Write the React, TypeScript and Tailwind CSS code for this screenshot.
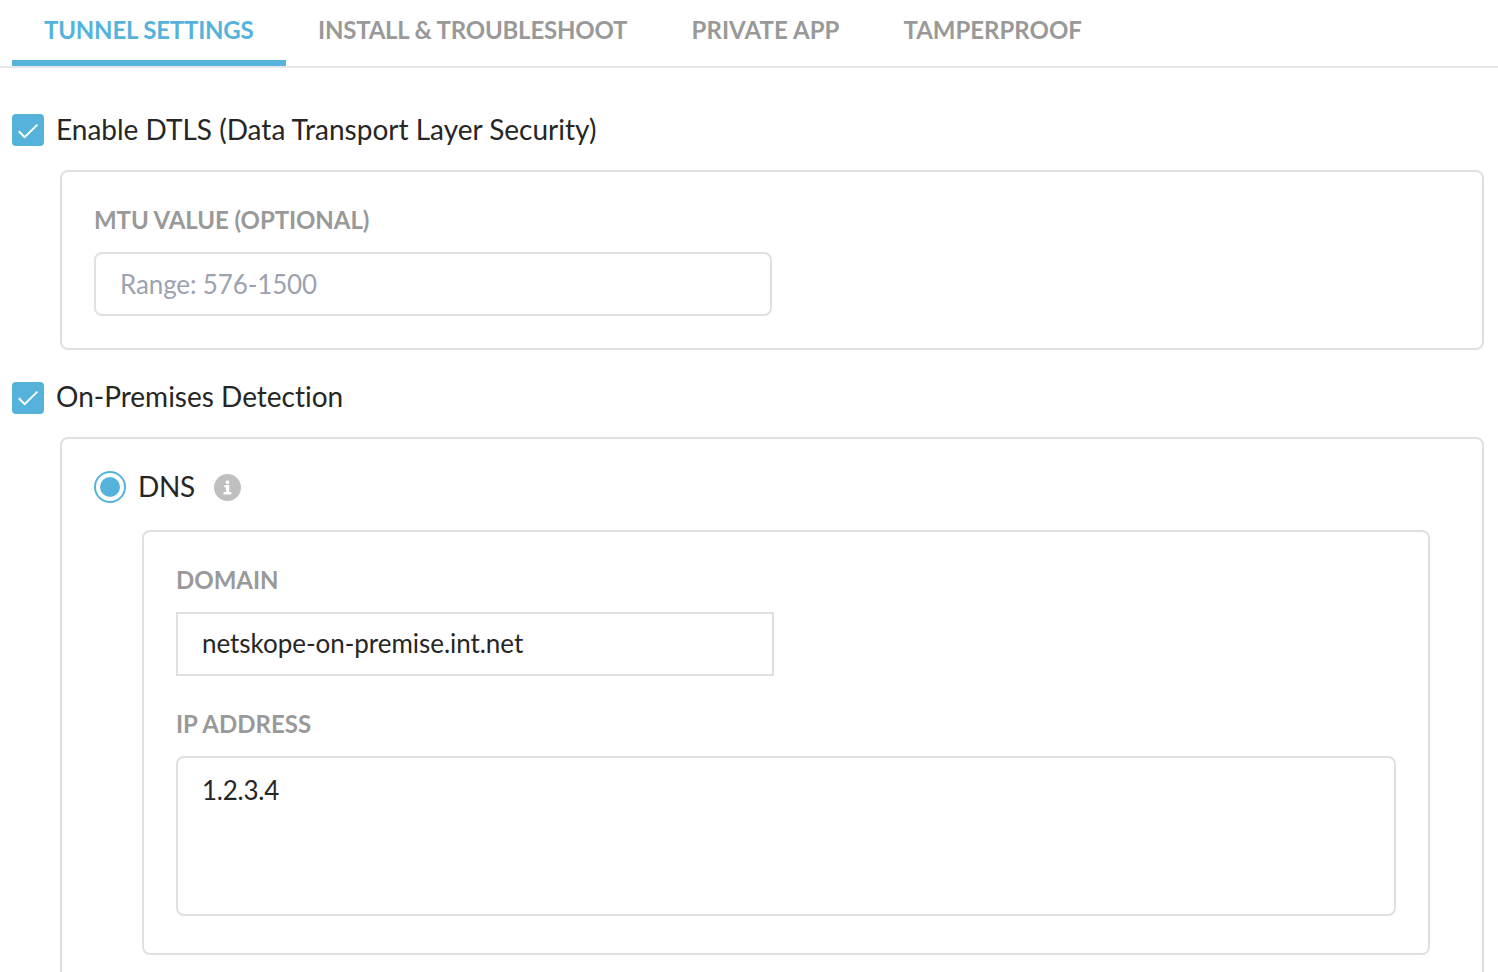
import React from "react";

const tabs = [
  { name: "TUNNEL SETTINGS", style: "w-[274px] border-b-[6px] border-[#55b3db] tracking-[-0.2px] text-[#55b3db]" },
  { name: "INSTALL & TROUBLESHOOT", style: "w-[373.5px] tracking-[-0.21px] text-[#999]" },
  { name: "PRIVATE APP", style: "w-[212px] tracking-[0.07px] text-[#999]" },
  { name: "TAMPERPROOF", style: "w-[242px] tracking-[-0.02px] text-[#999]" },
];

function Check({ label, raised = false }: { label: string; raised?: boolean }) {
  return (
    <label className="ml-3 flex h-8 items-center gap-3 text-[28px] leading-8 text-[#262626]">
      <span className="flex size-8 shrink-0 items-center justify-center rounded-[4px] bg-[#55b3db]">
        <svg viewBox="0 0 32 32" className="size-8" fill="none" stroke="white" strokeWidth="2">
          <path d={raised ? "M6.8 16.3 12.7 22.2 25.4 9.6" : "M6.8 17.3 12.7 23.2 25.4 10.6"} />
        </svg>
      </span>
      <span className={raised ? "-mt-1 whitespace-nowrap" : "-mt-[2px] whitespace-nowrap"}>{label}</span>
    </label>
  );
}

function FieldLabel({ children }: { children: React.ReactNode }) {
  return <div className="h-8 text-2xl leading-8 font-bold whitespace-nowrap text-[#999]">{children}</div>;
}

export default function App() {
  return (
    <main className="h-[972px] w-[1498px] overflow-hidden bg-white font-['Lato',sans-serif] [font-variant-ligatures:no-common-ligatures]">
      <nav className="flex h-[68px] border-b-2 border-[#e6e6e6] pl-3">
        {tabs.map((tab) => (
          <div
            key={tab.name}
            className={"h-[66px] px-8 pt-[14px] text-2xl leading-8 font-bold whitespace-nowrap " + tab.style}
          >
            {tab.name}
          </div>
        ))}
      </nav>

      <div className="pt-[46px]">
        <Check label="Enable DTLS (Data Transport Layer Security)" />
        <section className="mt-6 ml-[60px] h-[180px] w-[1424px] rounded-lg border-2 border-[#e0e0e0] px-8 pt-8">
          <FieldLabel>
            <span className="tracking-[-0.07px]">MTU VALUE (OPTIONAL)</span>
          </FieldLabel>
          <div className="mt-4 flex h-16 w-[678px] items-center rounded-lg border-2 border-[#e0e0e0] px-6 text-[26px] tracking-[-0.13px] text-[#9ca3af]">
            Range: 576-1500
          </div>
        </section>
      </div>

      <div className="pt-8">
        <Check label="On-Premises Detection" raised />
        <section className="mt-[23px] ml-[60px] h-[600px] w-[1424px] rounded-lg border-2 border-[#e0e0e0] px-8 pt-8">
          <div className="flex h-8 items-center text-[28px] leading-8 text-[#262626]">
            <span className="flex size-8 items-center justify-center rounded-full border-2 border-[#55b3db]">
              <span className="size-5 rounded-full bg-[#55b3db]" />
            </span>
            <span className="-mt-[2px] ml-3 w-[57px] tracking-[-0.3px]">DNS</span>
            <svg viewBox="0 0 26 26" className="mt-px ml-[18.5px] size-[27px]">
              <circle cx="13" cy="13" r="13" fill="#bfbfbf" />
              <circle cx="13" cy="7.9" r="1.8" fill="white" />
              <path d="M10 10.7h4.7v6.6h2.1v2.4H9.2v-2.4h2.3v-4.2H10z" fill="white" />
            </svg>
          </div>
          <div className="mt-[27px] ml-12 h-[425px] w-[1288px] rounded-lg border-2 border-[#e0e0e0] px-8 pt-8">
            <FieldLabel>DOMAIN</FieldLabel>
            <div className="mt-4 flex h-16 w-[598px] items-center border-2 border-[#e0e0e0] px-6 pb-px text-[26px] tracking-[-0.04px] text-[#262626]">
              netskope-on-premise.int.net
            </div>
            <div className="mt-8">
              <FieldLabel>IP ADDRESS</FieldLabel>
            </div>
            <div className="mt-4 h-40 w-[1220px] rounded-lg border-2 border-[#e0e0e0] px-6 pt-4 text-[26px] leading-8 tracking-[-0.25px] text-[#262626]">
              1.2.3.4
            </div>
          </div>
        </section>
      </div>
    </main>
  );
}
